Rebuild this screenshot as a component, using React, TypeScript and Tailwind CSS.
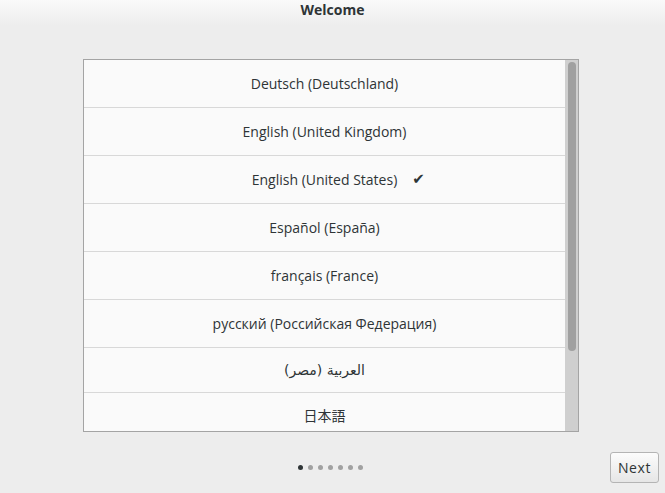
import React from 'react'

const LANGS = [
  { label: 'Deutsch (Deutschland)', h: 'h-[48px]' },
  { label: 'English (United Kingdom)', h: 'h-[48px]' },
  { label: 'English (United States)', h: 'h-[48px]', checked: true },
  { label: 'Español (España)', h: 'h-[48px]' },
  { label: 'français (France)', h: 'h-[48px]' },
  { label: 'русский (Российская Федерация)', h: 'h-[48px]' },
  { label: 'العربية (مصر)', h: 'h-[45px]', rtl: true },
  { label: '日本語', h: 'h-[44px]' },
]

export default function App() {
  return (
    <div className="flex h-[493px] w-[665px] flex-col overflow-hidden bg-[#ededed] font-['Open_Sans','Noto_Sans_CJK_JP',sans-serif] text-[14px] text-[#2e3436]">
      <header className="flex h-[26px] shrink-0 justify-center bg-gradient-to-b from-[#fafafa] to-[#ededed]">
        <h1 className="text-[14px] font-bold leading-[20px]">Welcome</h1>
      </header>

      <div className="ml-[83px] mt-[33px] flex h-[373px] w-[496px] shrink-0 border border-[#a4a4a4] bg-[#fafafa]">
        <ul className="flex-1 overflow-hidden">
          {LANGS.map((lang) => (
            <li
              key={lang.label}
              className={`flex ${lang.h} items-center justify-center border-b border-[#d8d8d8] last:border-b-0`}
            >
              <span dir={lang.rtl ? 'rtl' : undefined} className={`relative ${lang.rtl ? "font-['DejaVu_Sans',sans-serif] text-[14px]" : ''}`}>
                {lang.label}
                {lang.checked && (
                  <span className="absolute left-full top-[-1px] ml-[15px] font-['DejaVu_Sans'] text-[15px]">✔</span>
                )}
              </span>
            </li>
          ))}
        </ul>
        <div className="w-[13px] shrink-0 bg-[#cfcfcf] pl-[3px] pr-[2px] pt-[2px]">
          <div className="h-[289px] w-[8px] rounded-full bg-[#a0a0a0]" />
        </div>
      </div>

      <footer className="mt-[20px] flex items-center">
        <div className="mb-[1px] ml-[298px] flex gap-[5px]">
          {[0, 1, 2, 3, 4, 5, 6].map((i) => (
            <span key={i} className={`h-[5px] w-[5px] rounded-full ${i === 0 ? 'bg-[#2e3436]' : 'bg-[#a1a1a1]'}`} />
          ))}
        </div>
        <button className="ml-auto mr-[6px] h-[31px] w-[49px] rounded-[3px] border border-[#b4b4b4] bg-gradient-to-b from-[#fcfcfc] to-[#e6e6e6] text-[14px] tracking-[0.6px] text-[#2e3436]">
          Next
        </button>
      </footer>
    </div>
  )
}
